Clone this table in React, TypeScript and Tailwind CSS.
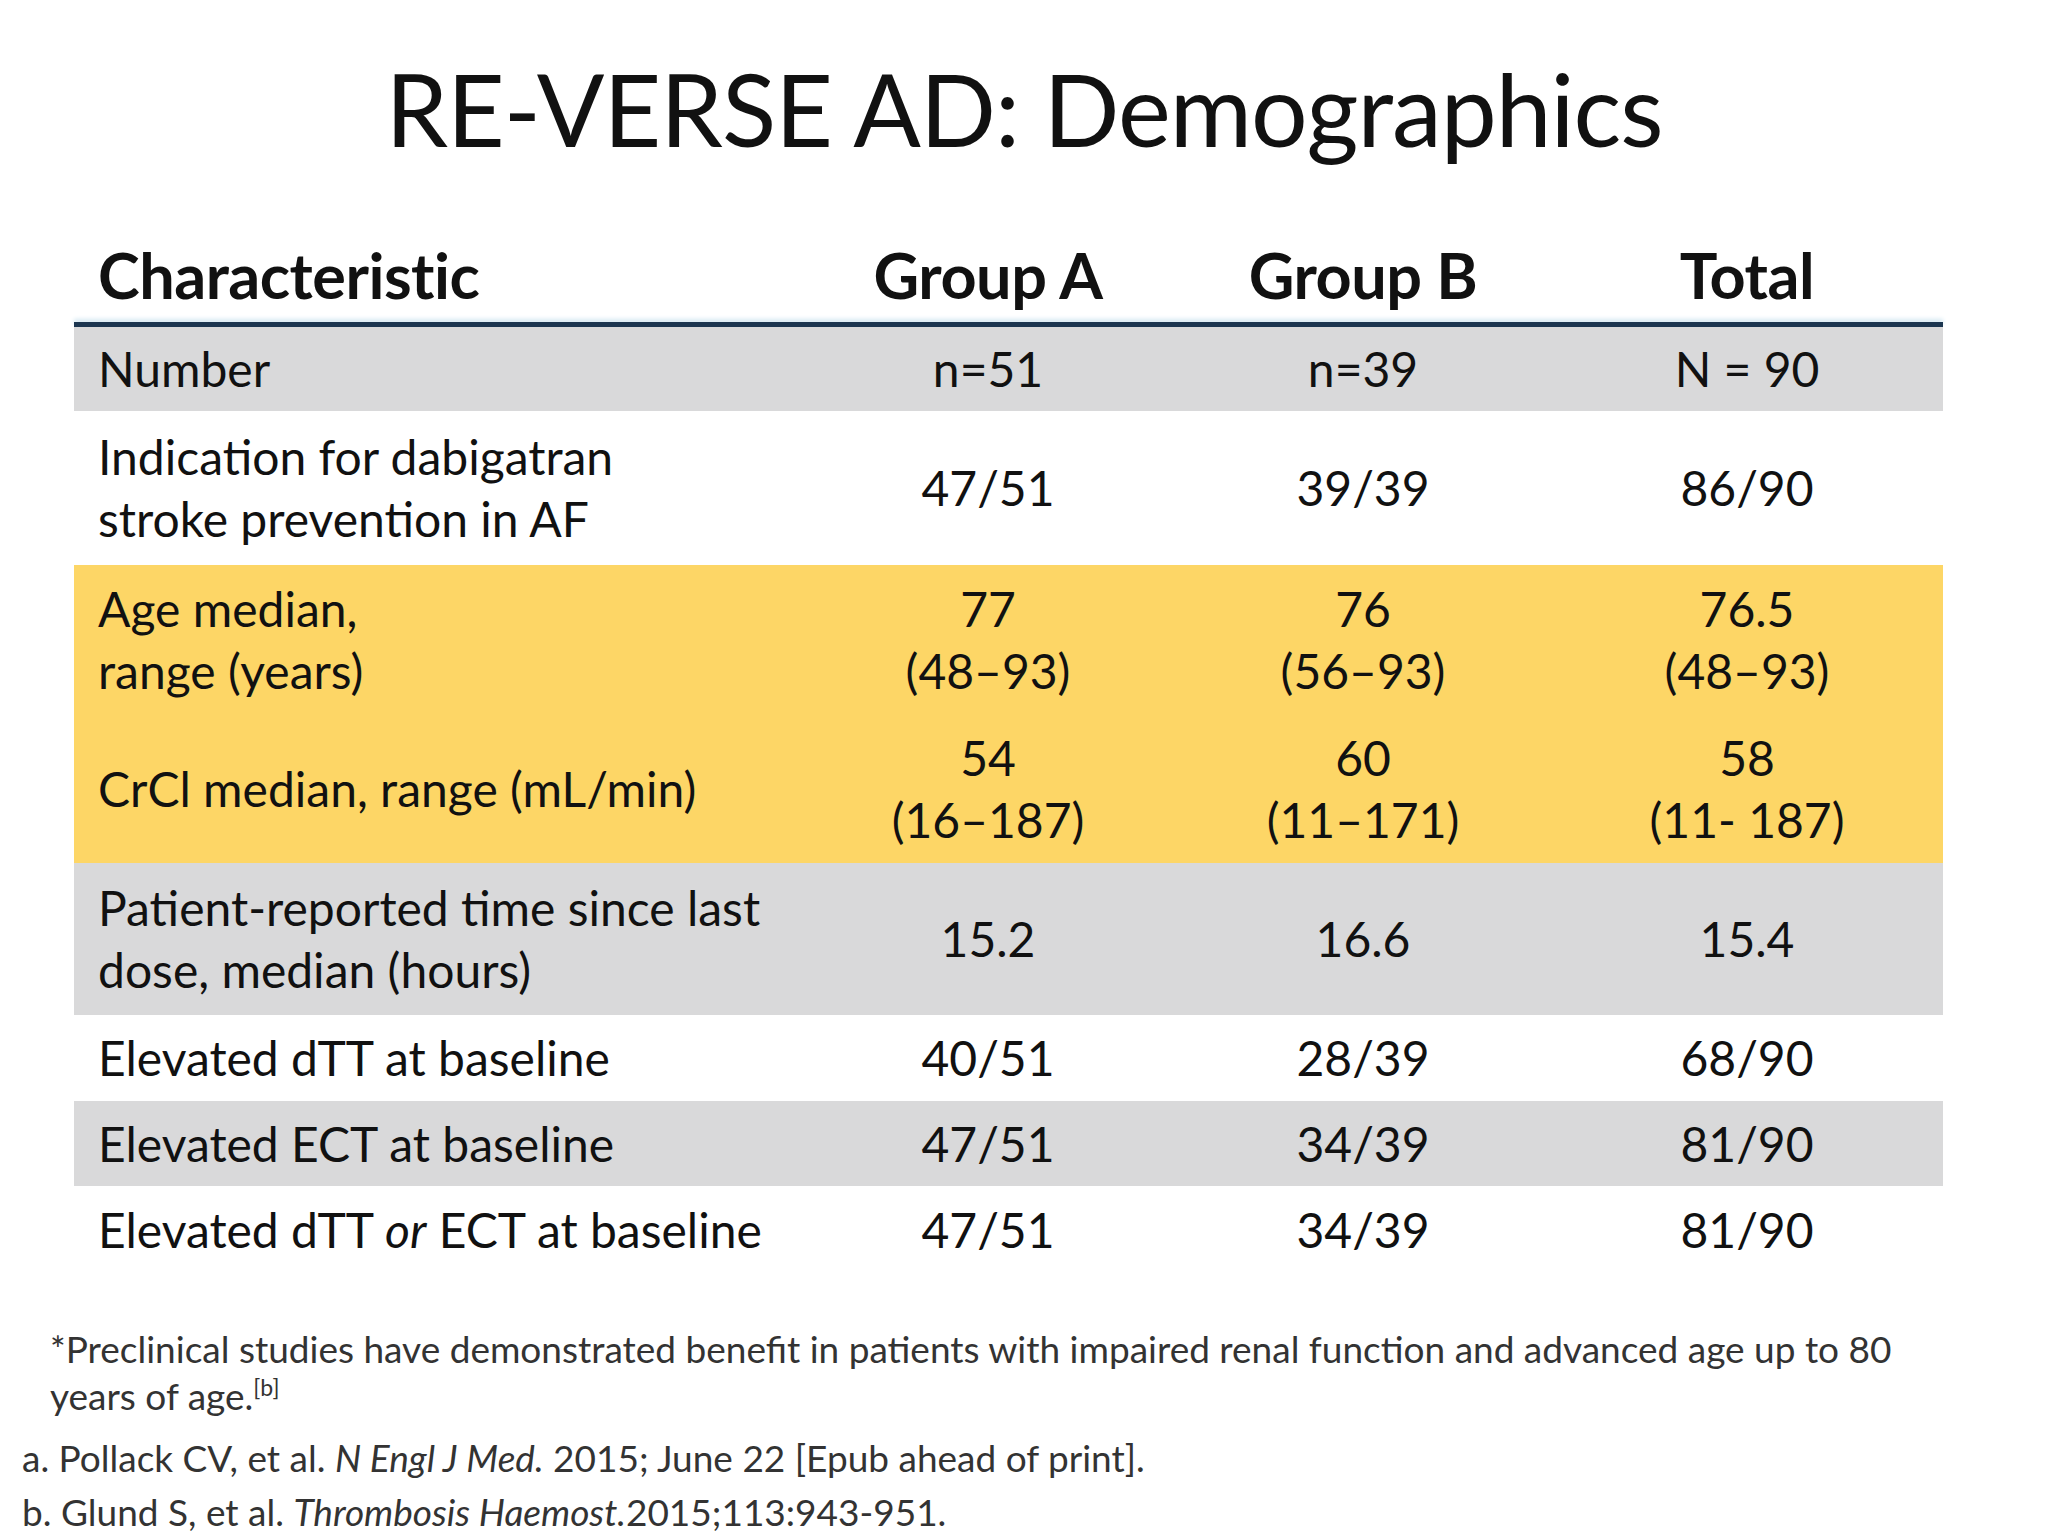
import React from "react";

type Row = {
  label: React.ReactNode;
  a: React.ReactNode;
  b: React.ReactNode;
  t: React.ReactNode;
  bg: string;
  h: string;
};

const rows: Row[] = [
  { label: "Number", a: "n=51", b: "n=39", t: "N = 90", bg: "bg-[#d9d9da]", h: "h-[84px]" },
  {
    label: (
      <>
        Indication for dabigatran
        <br />
        stroke prevention in AF
      </>
    ),
    a: "47/51",
    b: "39/39",
    t: "86/90",
    bg: "bg-white",
    h: "h-[154px]",
  },
  {
    label: (
      <>
        Age median,
        <br />
        range (years)
      </>
    ),
    a: (
      <>
        77
        <br />
        (48–93)
      </>
    ),
    b: (
      <>
        76
        <br />
        (56–93)
      </>
    ),
    t: (
      <>
        76.5
        <br />
        (48–93)
      </>
    ),
    bg: "bg-[#fdd666]",
    h: "h-[150px]",
  },
  {
    label: "CrCl median, range (mL/min)",
    a: (
      <>
        54
        <br />
        (16–187)
      </>
    ),
    b: (
      <>
        60
        <br />
        (11–171)
      </>
    ),
    t: (
      <>
        58
        <br />
        (11- 187)
      </>
    ),
    bg: "bg-[#fdd666]",
    h: "h-[148px]",
  },
  {
    label: (
      <>
        Patient-reported time since last
        <br />
        dose, median (hours)
      </>
    ),
    a: "15.2",
    b: "16.6",
    t: "15.4",
    bg: "bg-[#d9d9da]",
    h: "h-[152px]",
  },
  { label: "Elevated dTT at baseline", a: "40/51", b: "28/39", t: "68/90", bg: "bg-white", h: "h-[86px]" },
  { label: "Elevated ECT at baseline", a: "47/51", b: "34/39", t: "81/90", bg: "bg-[#d9d9da]", h: "h-[85px]" },
  {
    label: (
      <>
        Elevated dTT <i>or</i> ECT at baseline
      </>
    ),
    a: "47/51",
    b: "34/39",
    t: "81/90",
    bg: "bg-white",
    h: "h-[87px]",
  },
];

export default function App() {
  return (
    <div className="w-[2048px] h-[1536px] bg-white text-[#111] font-['Lato',sans-serif] overflow-hidden">
      {/* Title */}
      <div className="h-[236px] pt-[58px] text-center text-[100px] leading-none tracking-[-1px]">
        RE-VERSE AD: Demographics
      </div>

      {/* Table */}
      <div className="ml-[74px] w-[1869px]">
        <div className="grid grid-cols-[727px_374px_376px_392px] h-[86px] pb-[10px] items-center text-[63px] leading-none font-bold tracking-[-0.5px]">
          <div className="pl-[24px]">Characteristic</div>
          <div className="text-center">Group A</div>
          <div className="text-center">Group B</div>
          <div className="text-center">Total</div>
        </div>
        <div className="h-[5px] bg-[#1c3650] shadow-[0_-3px_4px_#d6e8f2]" />
        {rows.map((r, i) => (
          <div
            key={i}
            className={`grid grid-cols-[727px_374px_376px_392px] items-center text-[48px] leading-[62px] ${r.bg} ${r.h}`}
          >
            <div className="pl-[24px]">{r.label}</div>
            <div className="text-center">{r.a}</div>
            <div className="text-center">{r.b}</div>
            <div className="text-center">{r.t}</div>
          </div>
        ))}
      </div>

      {/* Notes */}
      <div className="mt-[52px] pl-[50px] w-[1910px] text-[37px] leading-[47px] text-[#333]">
        *Preclinical studies have demonstrated benefit in patients with impaired renal function and advanced age up to 80
        years of age.<span className="align-top text-[23px] leading-[30px]">[b]</span>
      </div>
      <div className="mt-[12px] pl-[22px] text-[37px] leading-[54px] text-[#333]">
        <div>
          a. Pollack CV, et al. <i>N Engl J Med.</i> 2015; June 22 [Epub ahead of print].
        </div>
        <div>
          b. Glund S, et al. <i>Thrombosis Haemost.</i>2015;113:943-951.
        </div>
      </div>
    </div>
  );
}
